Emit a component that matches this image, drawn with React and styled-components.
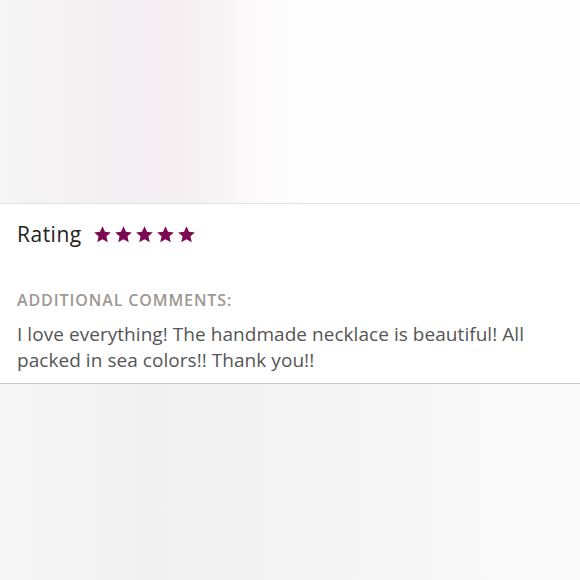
import styled, { createGlobalStyle } from 'styled-components'

const GlobalStyle = createGlobalStyle`
  html, body {
    margin: 0;
    padding: 0;
    background: #fafafa;
  }
  body {
    font-family: 'Open Sans', 'Liberation Sans', sans-serif;
  }
`

const Page = styled.div`
  width: 580px;
  height: 580px;
  display: flex;
  flex-direction: column;
  overflow: hidden;
`

const Backdrop = styled.div`
  height: ${(p) => p.$h}px;
  flex: ${(p) => (p.$grow ? 1 : 'none')};
  background: ${(p) => p.$bg};
`

const Card = styled.section`
  background: #fff;
  border-top: 1px solid #e2e2e2;
  border-bottom: 1px solid #c9c9c9;
  padding: 15px 17px 10px;
  display: flex;
  flex-direction: column;
`

const RatingRow = styled.div`
  display: flex;
  align-items: center;
  gap: 12px;
  height: 30px;
`

const Label = styled.span`
  font-size: 21px;
  color: #222;
  letter-spacing: 0.5px;
`

const Stars = styled.div`
  display: flex;
  gap: 4px;
`

const Heading = styled.h4`
  margin: 40px 0 0;
  font-size: 16px;
  font-weight: 600;
  color: #9e9892;
  text-transform: uppercase;
  letter-spacing: 0.9px;
`

const Comment = styled.p`
  margin: 10px 0 0;
  font-size: 19px;
  line-height: 26px;
  letter-spacing: 0.05px;
  color: #555;
`

const Star = () => (
  <svg width='17' height='17' viewBox='0 0 24 23'>
    <path
      fill='#7b0a52'
      d='M12 0l3.5 7.6 8.3.9-6.2 5.6 1.8 8.2L12 18.1l-7.4 4.2 1.8-8.2L.2 8.5l8.3-.9z'
    />
  </svg>
)

const App = () => {
  return (
    <>
      <GlobalStyle />
      <Page>
        <Backdrop
          $h={203}
          $bg='linear-gradient(90deg, #f6f6f6 0%, #f3eef1 22%, #f5eff2 32%, #fbf8f9 42%, #fefefe 52%, #fefefe 100%)'
        />
        <Card>
          <RatingRow>
            <Label>Rating</Label>
            <Stars>
              {[0, 1, 2, 3, 4].map((i) => (
                <Star key={i} />
              ))}
            </Stars>
          </RatingRow>
          <Heading>Additional comments:</Heading>
          <Comment>
            I love everything! The handmade necklace is beautiful! All packed in
            sea colors!! Thank you!!
          </Comment>
        </Card>
        <Backdrop
          $grow
          $bg='linear-gradient(90deg, #f7f7f7 0%, #f1f1f1 25%, #f3f3f3 45%, #f7f7f7 70%, #fafafa 100%)'
        />
      </Page>
    </>
  )
}

export default App
